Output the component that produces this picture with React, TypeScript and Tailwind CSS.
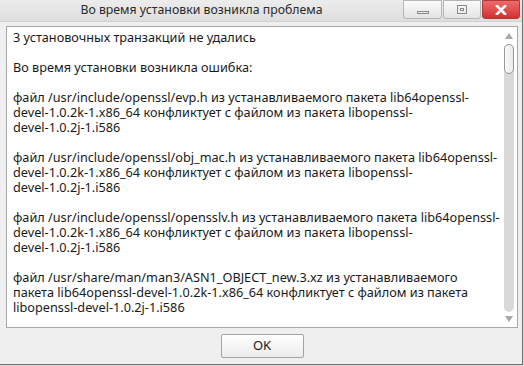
const FONT = { fontFamily: '"Noto Sans", "Open Sans", sans-serif' };

// Lines are broken where the original dialog broke them
const PARAGRAPHS: string[][] = [
  ["3 установочных транзакций не удались"],
  ["Во время установки возникла ошибка:"],
  [
    "файл /usr/include/openssl/evp.h из устанавливаемого пакета lib64openssl-",
    "devel-1.0.2k-1.x86_64 конфликтует с файлом из пакета libopenssl-",
    "devel-1.0.2j-1.i586",
  ],
  [
    "файл /usr/include/openssl/obj_mac.h из устанавливаемого пакета lib64openssl-",
    "devel-1.0.2k-1.x86_64 конфликтует с файлом из пакета libopenssl-",
    "devel-1.0.2j-1.i586",
  ],
  [
    "файл /usr/include/openssl/opensslv.h из устанавливаемого пакета lib64openssl-",
    "devel-1.0.2k-1.x86_64 конфликтует с файлом из пакета libopenssl-",
    "devel-1.0.2j-1.i586",
  ],
  [
    "файл /usr/share/man/man3/ASN1_OBJECT_new.3.xz из устанавливаемого",
    "пакета lib64openssl-devel-1.0.2k-1.x86_64 конфликтует с файлом из пакета",
    "libopenssl-devel-1.0.2j-1.i586",
  ],
];

function TitleButton({ kind, w }: { kind: "min" | "max" | "close"; w: string }) {
  if (kind === "close") {
    return (
      <div className={`${w} h-[19px] rounded-b-[3px] border border-[#b03a3a] bg-gradient-to-b from-[#ee6b6b] to-[#cf3030] flex items-center justify-center`}>
        <svg width="12" height="10" viewBox="0 0 12 10">
          <path d="M2 1 L10 9 M10 1 L2 9" stroke="#fff" strokeWidth="2.6" strokeLinecap="square" />
        </svg>
      </div>
    );
  }
  return (
    <div className={`${w} h-[19px] rounded-b-[3px] border border-[#b5b5b5] bg-gradient-to-b from-[#fbfbfb] to-[#e4e4e4] flex items-center justify-center`}>
      {kind === "min" ? (
        <div className="w-[12px] h-[3px] mt-[6px] border border-[#8a8a8a]" />
      ) : (
        <div className="w-[10px] h-[9px] border border-[#8a8a8a] flex items-center justify-center">
          <div className="w-[4px] h-[3px] border border-[#8a8a8a]" />
        </div>
      )}
    </div>
  );
}

export default function App() {
  return (
    <div className="w-[524px] h-[366px] bg-[#dcdcdc] text-[#1a1a1a]" style={FONT}>
      <div className="w-[523px] h-[365px] border-r border-b border-[#6f6f6f] bg-[#efefef] flex flex-col">
        {/* Title bar */}
        <div className="h-[22px] flex bg-gradient-to-b from-[#ececec] to-[#dedede] border-b border-[#d0d0d0]">
          <div className="w-[403px] flex items-center justify-center text-[12.3px] text-[#2a2a2a] pb-[1px]">
            Во время установки возникла проблема
          </div>
          <div className="flex gap-[1px] items-start">
            <TitleButton kind="min" w="w-[39px]" />
            <TitleButton kind="max" w="w-[38px]" />
            <TitleButton kind="close" w="w-[38px]" />
          </div>
        </div>

        {/* Message box */}
        <div className="mx-[6px] mt-[4px] h-[302px] w-[512px] border border-[#a8a8a8] bg-white flex">
          <div className="flex-1 pl-[6px] pt-[3px] text-[12.7px] leading-[15px] overflow-hidden whitespace-nowrap flex flex-col gap-[15px]">
            {PARAGRAPHS.map((lines, i) => (
              <p key={i}>
                {lines.map((l, j) => (
                  <span key={j} className="block">
                    {l}
                  </span>
                ))}
              </p>
            ))}
          </div>
          {/* Scrollbar */}
          <div className="w-[16px] flex flex-col items-center pt-[6px] pb-[2px]">
            <svg width="8" height="6" viewBox="0 0 8 6">
              <path d="M4 0 L8 6 L0 6 Z" fill="#a8a8a8" />
            </svg>
            <div className="mt-[5px] flex-1 w-[10px] rounded-full bg-[#d9d9d9] flex flex-col">
              <div className="h-[30px] w-[10px] rounded-full border border-[#9a9a9a] bg-gradient-to-r from-[#fafafa] to-[#e9e9e9]" />
            </div>
            <svg className="mt-[4px] mb-[3px]" width="8" height="6" viewBox="0 0 8 6">
              <path d="M0 0 L8 0 L4 6 Z" fill="#a8a8a8" />
            </svg>
          </div>
        </div>

        {/* Button row */}
        <div className="flex justify-center pt-[6px]">
          <button className="ml-[2px] w-[83px] h-[24px] rounded-[2px] border border-[#a4a4a4] bg-gradient-to-b from-[#ffffff] to-[#ececec] text-[13px] text-[#1a1a1a]">
            OK
          </button>
        </div>
      </div>
    </div>
  );
}
